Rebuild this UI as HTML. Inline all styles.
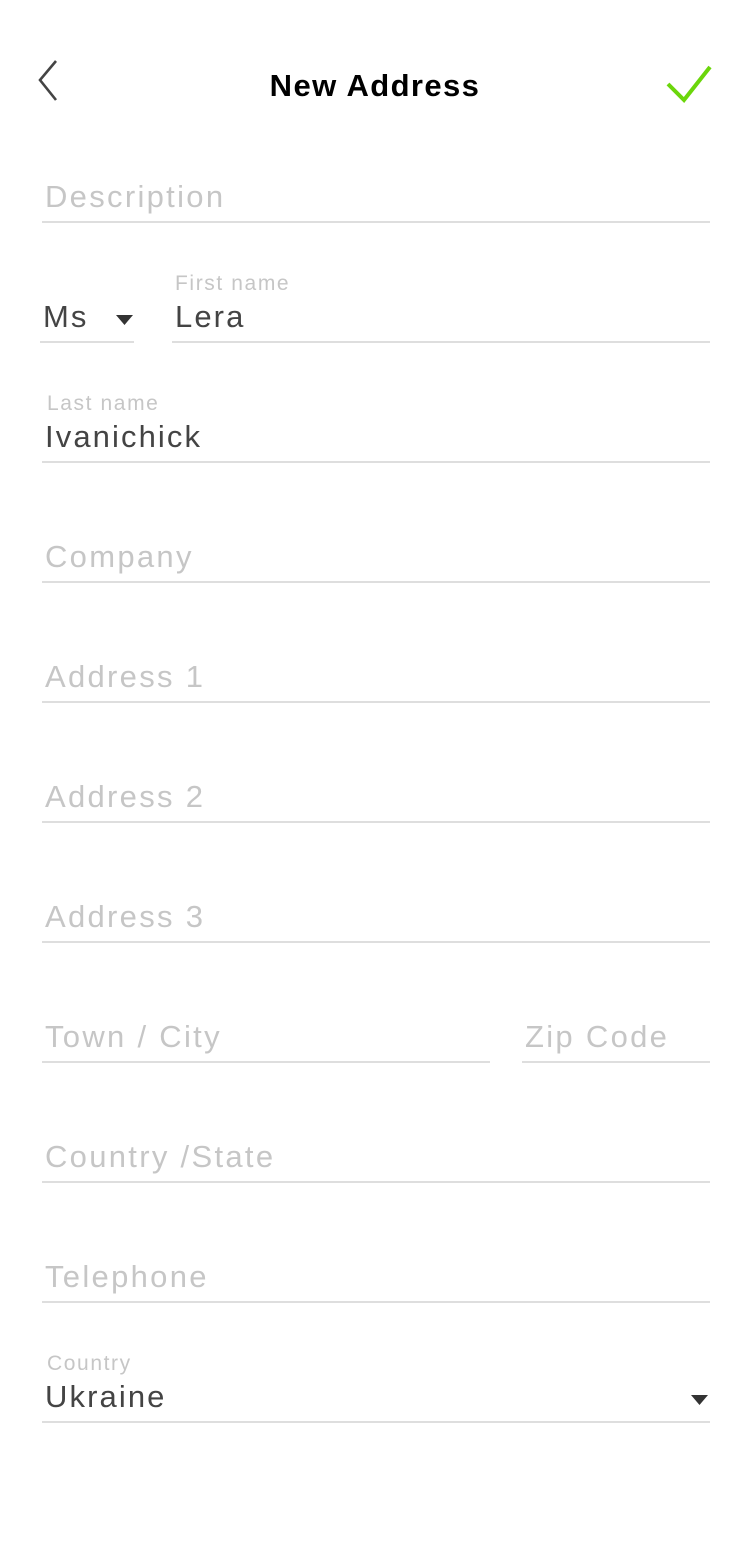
<!DOCTYPE html>
<html><head><meta charset="utf-8"><style>
body{margin:0;width:750px;height:1564px;background:#fff;font-family:"Liberation Sans",sans-serif;position:relative;overflow:hidden}
.l{position:absolute;height:2px;background:#dedede}
.t{position:absolute;white-space:nowrap;line-height:1}
.p{font-size:31px;color:#c6c6c6;letter-spacing:2.3px}
.v{font-size:31px;color:#444;letter-spacing:2.1px}
.s{font-size:21px;color:#c6c6c6;letter-spacing:1.6px}
</style></head><body>
<svg style="position:absolute;left:34px;top:58px" width="26" height="46"><path d="M22 3 L6 22 L22 42" fill="none" stroke="#444" stroke-width="2.6"/></svg>
<div class="t" style="left:0;width:750px;text-align:center;top:70px;font-size:31px;font-weight:bold;color:#000;letter-spacing:1.4px">New Address</div>
<svg style="position:absolute;left:664px;top:64px" width="50" height="40"><path d="M4 20 L20 36 L46 3" fill="none" stroke="#6bd60b" stroke-width="4"/></svg>

<div class="t p" style="left:45px;top:181px">Description</div><div class="l" style="left:42px;width:668px;top:221px"></div>

<div class="t v" style="left:43px;top:301px">Ms</div>
<svg style="position:absolute;left:116px;top:315px" width="18" height="12"><path d="M0 0H17L8.5 10Z" fill="#333"/></svg>
<div class="l" style="left:40px;width:94px;top:341px"></div>
<div class="t s" style="left:175px;top:273px">First name</div>
<div class="t v" style="left:175px;top:301px">Lera</div>
<div class="l" style="left:172px;width:538px;top:341px"></div>

<div class="t s" style="left:47px;top:393px">Last name</div>
<div class="t v" style="left:45px;top:421px">Ivanichick</div><div class="l" style="left:42px;width:668px;top:461px"></div>

<div class="t p" style="left:45px;top:541px">Company</div><div class="l" style="left:42px;width:668px;top:581px"></div>
<div class="t p" style="left:45px;top:661px">Address 1</div><div class="l" style="left:42px;width:668px;top:701px"></div>
<div class="t p" style="left:45px;top:781px">Address 2</div><div class="l" style="left:42px;width:668px;top:821px"></div>
<div class="t p" style="left:45px;top:901px">Address 3</div><div class="l" style="left:42px;width:668px;top:941px"></div>

<div class="t p" style="left:45px;top:1021px">Town / City</div><div class="l" style="left:42px;width:448px;top:1061px"></div>
<div class="t p" style="left:525px;top:1021px">Zip Code</div><div class="l" style="left:522px;width:188px;top:1061px"></div>

<div class="t p" style="left:45px;top:1141px">Country /State</div><div class="l" style="left:42px;width:668px;top:1181px"></div>
<div class="t p" style="left:45px;top:1261px">Telephone</div><div class="l" style="left:42px;width:668px;top:1301px"></div>

<div class="t s" style="left:47px;top:1353px">Country</div>
<div class="t v" style="left:45px;top:1381px">Ukraine</div>
<svg style="position:absolute;left:691px;top:1395px" width="18" height="12"><path d="M0 0H17L8.5 10Z" fill="#333"/></svg>
<div class="l" style="left:42px;width:668px;top:1421px"></div>
</body></html>
